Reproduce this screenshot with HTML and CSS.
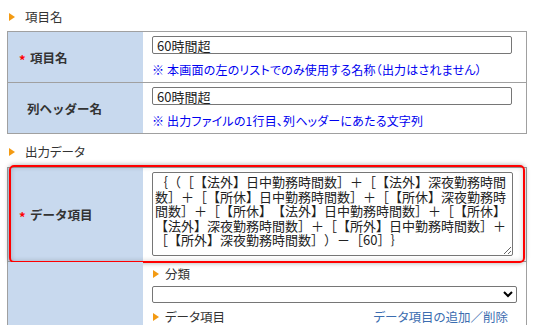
FILE: index.html
```html
<!DOCTYPE html>
<html lang="ja">
<head>
<meta charset="utf-8">
<link rel="stylesheet" href="styles.css">
</head>
<body>
<div class="page">
  <div class="sec-head first"><span class="tri"></span><span>項目名</span></div>
  <div class="tbl">
    <div class="row">
      <div class="lbl"><span class="req">*</span>項目名</div>
      <div class="cell">
        <input class="txt" type="text" value="60時間超">
        <div class="note">※ 本画面の左のリストでのみ使用する名称（出力はされません）</div>
      </div>
    </div>
    <div class="row last">
      <div class="lbl plain">列ヘッダー名</div>
      <div class="cell">
        <input class="txt" type="text" value="60時間超">
        <div class="note">※ 出力ファイルの1行目、列ヘッダーにあたる文字列</div>
      </div>
    </div>
  </div>

  <div class="sec-head second"><span class="tri"></span><span>出力データ</span></div>
  <div class="tbl open">
    <div class="row hl">
      <div class="lbl"><span class="req">*</span>データ項目</div>
      <div class="cell">
        <textarea class="area">｛（［【法外】日中勤務時間数］＋［【法外】深夜勤務時間数］＋［【所休】日中勤務時間数］＋［【所休】深夜勤務時間数］＋［【所休】【法外】日中勤務時間数］＋［【所休】【法外】深夜勤務時間数］＋［【所外】日中勤務時間数］＋［【所外】深夜勤務時間数］）－［60］｝</textarea>
      </div>
    </div>
    <div class="row last">
      <div class="lbl"></div>
      <div class="cell sub">
        <div class="sub-head"><span class="tri"></span><span>分類</span></div>
        <select class="sel"><option></option></select>
        <div class="sub-row">
          <div class="sub-head"><span class="tri"></span><span>データ項目</span></div>
          <a class="link">データ項目の追加／削除</a>
        </div>
        <div class="spacer"></div>
      </div>
    </div>
  </div>
</div>
</body>
</html>
```
FILE: styles.css
```css
html, body {
  margin: 0;
  padding: 0;
  background: #fff;
}
body {
  font-family: "Noto Sans CJK JP", "Noto Sans", sans-serif;
  color: #333;
  font-size: 12px;
  overflow: hidden;
  text-spacing-trim: space-all;
}
.page {
  width: 544px;
}
.sec-head {
  display: flex;
  align-items: center;
  gap: 10px;
  padding-left: 9px;
  height: 18px;
  line-height: 18px;
  font-size: 12.5px;
  color: #333;
  font-feature-settings: "palt";
}
.sec-head.first {
  margin-top: 8px;
  margin-bottom: 5px;
}
.sec-head.second {
  margin-top: 9px;
  margin-bottom: 6px;
}
.tri {
  display: inline-block;
  width: 0;
  height: 0;
  border-top: 4px solid transparent;
  border-bottom: 4px solid transparent;
  border-left: 6px solid #f39a12;
}
.tbl {
  margin-left: 7px;
  width: 518px;
  border: 1px solid #a0a0a0;
}
.tbl.open {
  border-bottom: none;
}
.row {
  display: grid;
  grid-template-columns: 135px 1fr;
  border-bottom: 1px solid #a0a0a0;
  position: relative;
}
.row.last {
  border-bottom: none;
}
.lbl {
  background: #c8d9ee;
  display: flex;
  align-items: center;
  padding-left: 11px;
  font-weight: bold;
  font-size: 12.5px;
  color: #333;
}
.lbl.plain {
  padding-left: 19px;
}
.req {
  display: inline-block;
  width: 11px;
  color: #ff0000;
  font-size: 13px;
  font-weight: bold;
  line-height: 1;
  position: relative;
  top: 2px;
}
.cell {
  padding: 4px 9px 4px 9px;
  display: flex;
  flex-direction: column;
  align-items: flex-start;
}
.txt {
  box-sizing: border-box;
  width: 360px;
  height: 18px;
  margin: 0;
  border: 1px solid #767676;
  border-radius: 2px;
  padding: 0 4px;
  font-family: "Noto Sans CJK JP", sans-serif;
  font-size: 13px;
  color: #222;
  line-height: 16px;
}
.note {
  margin-top: 8px;
  line-height: 16px;
  height: 16px;
  color: #0000f0;
  font-size: 12px;
  letter-spacing: 0.2px;
  font-feature-settings: "palt";
  white-space: nowrap;
}
.row.hl .cell {
  padding-bottom: 5px;
}
.row.hl::after {
  content: "";
  position: absolute;
  top: -3px;
  bottom: -2px;
  left: 1px;
  right: 1px;
  border: 2px solid #ff0000;
  border-radius: 5px;
  box-shadow: 0 0 5px rgba(0, 0, 0, 0.35), inset 0 0 5px rgba(0, 0, 0, 0.2);
  pointer-events: none;
}
.area {
  box-sizing: border-box;
  width: 361px;
  height: 84px;
  margin: 0;
  border: 1px solid #767676;
  border-radius: 2px;
  padding: 2px 2px;
  font-family: "Noto Sans CJK JP", sans-serif;
  font-size: 13px;
  line-height: 14.5px;
  color: #222;
  display: block;
  text-spacing-trim: space-all;
  font-feature-settings: normal;
  resize: vertical;
}
.cell.sub {
  padding-top: 4px;
}
.sub-head {
  display: flex;
  align-items: center;
  gap: 6px;
  height: 16px;
  line-height: 16px;
  padding-left: 1px;
  font-size: 12.5px;
  color: #333;
  font-feature-settings: "palt";
}
.sel {
  box-sizing: border-box;
  width: 365px;
  height: 17px;
  margin: 4px 0 0 0;
  border: 1px solid #767676;
  border-radius: 2px;
  background: #fff;
  font-size: 12px;
  padding: 0;
}
.sub-row {
  margin-top: 6px;
  width: 356px;
  display: flex;
  justify-content: space-between;
  align-items: center;
}
.link {
  color: #3c6db0;
  font-size: 12.5px;
  line-height: 16px;
  font-feature-settings: "palt";
  text-decoration: none;
}
.spacer {
  height: 40px;
}
```
